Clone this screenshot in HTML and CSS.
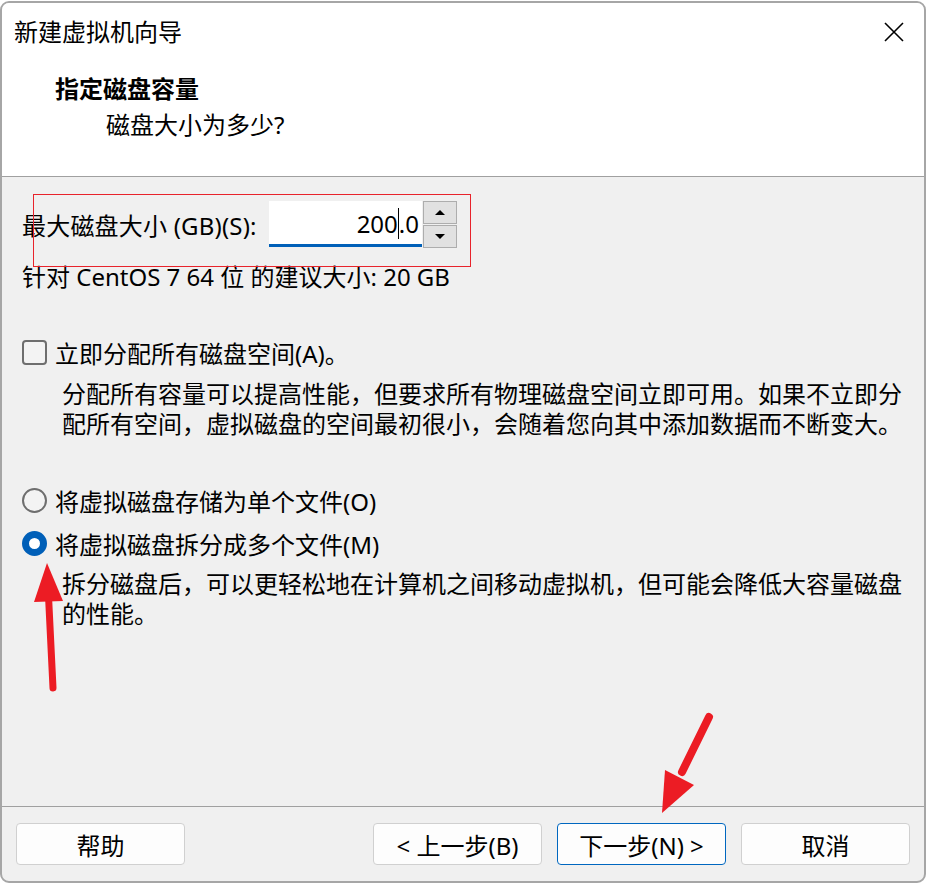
FILE: index.html
```html
<!DOCTYPE html>
<html lang="zh-CN">
<head>
    <meta charset="UTF-8">
    <title>新建虚拟机向导</title>
    <link rel="stylesheet" href="styles.css">
</head>
<body>
    <div class="window">
        <div class="title-bar">
            <span class="title">新建虚拟机向导</span>
            <svg class="close" width="20" height="20" viewBox="0 0 20 20">
                <path d="M1 1 L19 19 M19 1 L1 19" stroke="#000" stroke-width="1.6" fill="none"/>
            </svg>
        </div>

        <div class="header">
            <div class="header-title">指定磁盘容量</div>
            <div class="header-sub">磁盘大小为多少?</div>
        </div>

        <div class="content">
            <div class="size-row">
                <label for="diskSize">最大磁盘大小 (GB)(S):</label>
                <div class="spin">
                    <div class="spin-input"><span>200</span><span class="caret"></span><span>.0</span></div>
                    <div class="spin-buttons">
                        <div class="spin-btn"><span class="tri-up"></span></div>
                        <div class="spin-btn"><span class="tri-down"></span></div>
                    </div>
                </div>
            </div>
            <div class="hint">针对 CentOS 7 64 位 的建议大小: 20 GB</div>

            <div class="option check-row">
                <span class="checkbox"></span>
                <span>立即分配所有磁盘空间(A)。</span>
            </div>
            <div class="desc desc-alloc">分配所有容量可以提高性能，但要求所有物理磁盘空间立即可用。如果不立即分<br>配所有空间，虚拟磁盘的空间最初很小，会随着您向其中添加数据而不断变大。</div>

            <div class="option radio-one">
                <span class="radio"></span>
                <span>将虚拟磁盘存储为单个文件(O)</span>
            </div>
            <div class="option radio-two">
                <span class="radio checked"></span>
                <span>将虚拟磁盘拆分成多个文件(M)</span>
            </div>
            <div class="desc desc-split">拆分磁盘后，可以更轻松地在计算机之间移动虚拟机，但可能会降低大容量磁盘<br>的性能。</div>
        </div>

        <div class="footer">
            <button type="button" class="btn">帮助</button>
            <div class="nav-buttons">
                <button type="button" class="btn">&lt; 上一步(B)</button>
                <button type="button" class="btn btn-default">下一步(N) &gt;</button>
                <button type="button" class="btn">取消</button>
            </div>
        </div>
    </div>

    <!-- red annotations drawn over the screenshot -->
    <svg class="marks" width="927" height="884" viewBox="0 0 927 884">
        <rect x="33.5" y="194.5" width="437" height="72" fill="none" stroke="#e8232b" stroke-width="1"/>
        <line x1="53" y1="688" x2="48.5" y2="596" stroke="#ec1c24" stroke-width="7" stroke-linecap="round"/>
        <polygon points="47,563 34,602 63,601" fill="#ec1c24"/>
        <line x1="709" y1="717" x2="682" y2="772" stroke="#ec1c24" stroke-width="8" stroke-linecap="round"/>
        <polygon points="662,813 665,770 694,785" fill="#ec1c24"/>
    </svg>
</body>
</html>
```

FILE: styles.css
```css
* {
    box-sizing: border-box;
}
body {
    margin: 0;
    background-color: #ffffff;
    font-family: "Noto Sans", "Noto Sans CJK SC", sans-serif;
    font-size: 24px;
    color: #000;
}
.window {
    width: 926px;
    height: 882px;
    margin-top: 1px;
    border: 2px solid #a6a6a6;
    border-radius: 9px;
    overflow: hidden;
    display: flex;
    flex-direction: column;
    background-color: #f0f0f0;
}
.title-bar {
    height: 58px;
    flex: none;
    background-color: #fff;
    display: flex;
    align-items: center;
    justify-content: space-between;
    padding-left: 12px;
    padding-right: 20px;
}
.title {
    line-height: 32px;
}
.header {
    height: 116px;
    flex: none;
    background-color: #fff;
    border-bottom: 1px solid #a0a0a0;
    padding-top: 12px;
    padding-left: 53px;
}
.header-title {
    font-weight: bold;
    line-height: 32px;
}
.header-sub {
    line-height: 32px;
    margin-top: 4px;
    margin-left: 51px;
}
.content {
    flex: 1;
    padding-left: 20px;
    border-bottom: 1px solid #a0a0a0;
}
.size-row {
    display: flex;
    align-items: center;
    height: 46px;
    margin-top: 24px;
}
.size-row label {
    width: 247px;
    letter-spacing: 0.2px;
}
.spin {
    display: flex;
    height: 47px;
}
.spin-input {
    width: 153px;
    height: 46px;
    background-color: #fff;
    border-bottom: 3px solid #0060b8;
    display: flex;
    justify-content: flex-end;
    align-items: center;
    padding-right: 3px;
    padding-top: 2px;
}
.caret {
    display: inline-block;
    width: 1px;
    height: 31px;
    background-color: #000;
}
.spin-buttons {
    display: flex;
    flex-direction: column;
    gap: 1px;
    margin-left: 1px;
}
.spin-btn {
    width: 34px;
    height: 23px;
    background-color: #e1e1e1;
    border: 1px solid #adadad;
    display: flex;
    align-items: center;
    justify-content: center;
}
.tri-up {
    border-left: 5px solid transparent;
    border-right: 5px solid transparent;
    border-bottom: 5px solid #000;
}
.tri-down {
    border-left: 5px solid transparent;
    border-right: 5px solid transparent;
    border-top: 5px solid #000;
}
.hint {
    line-height: 30px;
    margin-top: 15px;
}
.option {
    display: flex;
    align-items: center;
    gap: 8px;
    height: 30px;
}
.check-row {
    margin-top: 45px;
}
.radio-one {
    margin-top: 46px;
}
.radio-two {
    margin-top: 13px;
}
.checkbox {
    width: 25px;
    height: 25px;
    border: 2px solid #6e6e6e;
    border-radius: 4px;
    background-color: #f3f3f3;
}
.radio {
    width: 25px;
    height: 25px;
    border: 2px solid #6e6e6e;
    border-radius: 50%;
    background-color: #f3f3f3;
}
.radio.checked {
    border: 7px solid #005fb8;
    background-color: #fff;
}
.desc {
    margin-left: 40px;
    line-height: 30px;
}
.desc-alloc {
    margin-top: 12px;
}
.desc-split {
    margin-top: 11px;
}
.footer {
    height: 74px;
    flex: none;
    display: flex;
    justify-content: space-between;
    padding: 16px 14px 0 14px;
}
.nav-buttons {
    display: flex;
    gap: 15px;
}
.btn {
    width: 169px;
    height: 42px;
    background-color: #fdfdfd;
    border: 1px solid #d0d0d0;
    border-radius: 4px;
    font-family: inherit;
    font-size: 24px;
    color: #000;
    padding: 0;
}
.btn-default {
    border-color: #0067c0;
}
.marks {
    position: absolute;
    left: 0;
    top: 0;
    pointer-events: none;
}
```
